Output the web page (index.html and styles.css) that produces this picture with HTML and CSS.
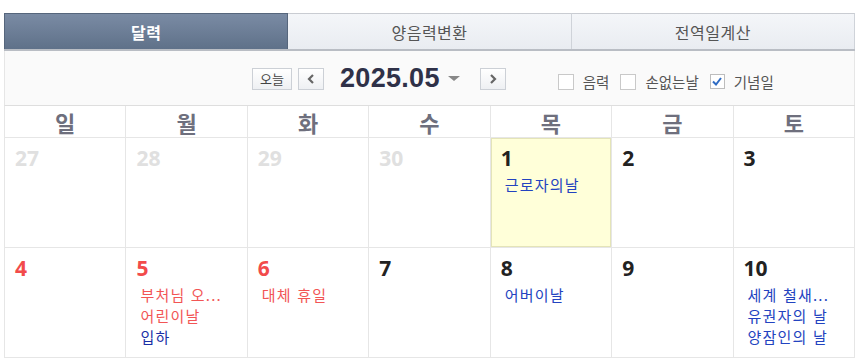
FILE: index.html
```html
<!DOCTYPE html>
<html lang="ko">
<head>
    <meta charset="UTF-8">
    <meta name="viewport" content="width=device-width, initial-scale=1.0">
    <title>달력</title>
    <link rel="stylesheet" href="styles.css">
</head>
<body>

    <div class="calendar">
        <!-- Tabs -->
        <ul class="tabs">
            <li class="tab on">달력</li>
            <li class="tab">양음력변환</li>
            <li class="tab">전역일계산</li>
        </ul>

        <!-- Toolbar -->
        <div class="toolbar">
            <button class="btn today-btn">오늘</button>
            <button class="btn arrow-btn">
                <svg width="8" height="10" viewBox="0 0 8 10"><path d="M6 1 L2 5 L6 9" fill="none" stroke="#666" stroke-width="2.2"/></svg>
            </button>
            <div class="month-title">2025.05 <span class="caret"></span></div>
            <button class="btn arrow-btn">
                <svg width="8" height="10" viewBox="0 0 8 10"><path d="M2 1 L6 5 L2 9" fill="none" stroke="#666" stroke-width="2.2"/></svg>
            </button>
            <div class="options">
                <label class="check"><span class="box"></span>음력</label>
                <label class="check"><span class="box"></span>손없는날</label>
                <label class="check"><span class="box checked">
                    <svg width="10" height="9" viewBox="0 0 10 9"><path d="M1 4.5 L4 7.5 L9 1" fill="none" stroke="#2f6cc4" stroke-width="2"/></svg>
                </span>기념일</label>
            </div>
        </div>

        <!-- Week header -->
        <div class="week">
            <div class="wday">일</div>
            <div class="wday">월</div>
            <div class="wday">화</div>
            <div class="wday">수</div>
            <div class="wday">목</div>
            <div class="wday">금</div>
            <div class="wday">토</div>
        </div>

        <!-- Days -->
        <div class="days">
            <div class="day other"><span class="num">27</span></div>
            <div class="day other"><span class="num">28</span></div>
            <div class="day other"><span class="num">29</span></div>
            <div class="day other"><span class="num">30</span></div>
            <div class="day today"><span class="num">1</span>
                <ul class="events"><li class="blue">근로자의날</li></ul>
            </div>
            <div class="day"><span class="num">2</span></div>
            <div class="day"><span class="num">3</span></div>

            <div class="day holiday"><span class="num">4</span></div>
            <div class="day holiday"><span class="num">5</span>
                <ul class="events">
                    <li class="red">부처님 오...</li>
                    <li class="red">어린이날</li>
                    <li class="navy">입하</li>
                </ul>
            </div>
            <div class="day holiday"><span class="num">6</span>
                <ul class="events"><li class="red">대체 휴일</li></ul>
            </div>
            <div class="day"><span class="num">7</span></div>
            <div class="day"><span class="num">8</span>
                <ul class="events"><li class="blue">어버이날</li></ul>
            </div>
            <div class="day"><span class="num">9</span></div>
            <div class="day"><span class="num">10</span>
                <ul class="events">
                    <li class="blue">세계 철새...</li>
                    <li class="blue">유권자의 날</li>
                    <li class="blue">양잠인의 날</li>
                </ul>
            </div>
        </div>
    </div>

</body>
</html>
```

FILE: styles.css
```css
/* Page */
body {
    margin: 0;
    padding: 13px 11px 0 4px;
    font-family: "Noto Sans CJK KR", "Noto Sans", sans-serif;
    background: #fff;
}

.calendar {
    width: 851px;
}

/* Tabs */
.tabs {
    display: flex;
    list-style: none;
    margin: 0;
    padding: 0;
    height: 38px;
    border-bottom: 2px solid #b9bdc4;
    box-sizing: border-box;
}

.tab {
    flex: 1;
    display: flex;
    align-items: center;
    justify-content: center;
    font-size: 16px;
    letter-spacing: 0.5px;
    color: #555;
    background: linear-gradient(#f4f6f9, #e9ecf1);
    border-top: 1px solid #c9ccd2;
    border-right: 1px solid #cfd3d9;
}

.tab.on {
    color: #fff;
    font-weight: bold;
    background: linear-gradient(#7a8ba4, #5f7189);
    border: 1px solid #56667c;
    border-bottom: none;
}

/* Toolbar */
.toolbar {
    display: flex;
    align-items: center;
    height: 54px;
    padding-left: 247px;
    background: #fafafa;
    border-left: 1px solid #e6e6e6;
    border-right: 1px solid #e6e6e6;
    box-sizing: border-box;
}

.btn {
    height: 22px;
    padding: 0;
    border: 1px solid #ccd0d6;
    background: linear-gradient(#ffffff, #eef0f3);
    font-family: inherit;
    color: #444;
    cursor: pointer;
    margin-top: 2px;
    display: flex;
    align-items: center;
    justify-content: center;
}

.today-btn {
    width: 40px;
    font-size: 13px;
    line-height: 18px;
}

.arrow-btn {
    width: 26px;
    margin-left: 6px;
}

.month-title {
    margin: 0 14px 0 16px;
    font-family: "Liberation Sans", Arial, sans-serif;
    font-size: 27px;
    font-weight: bold;
    letter-spacing: 0.3px;
    color: #2f3148;
    display: flex;
    align-items: center;
}

.caret {
    display: inline-block;
    margin-left: 8px;
    border-left: 6px solid transparent;
    border-right: 6px solid transparent;
    border-top: 5px solid #888;
}

.options {
    display: flex;
    align-items: center;
    margin-left: 52px;
    margin-top: 7px;
    gap: 11px;
}

.check {
    display: flex;
    align-items: center;
    font-size: 14.5px;
    color: #555;
}

.box {
    width: 16px;
    height: 16px;
    border: 1px solid #c9c9c9;
    background: #fff;
    margin-right: 9px;
    box-sizing: border-box;
    display: flex;
    align-items: center;
    justify-content: center;
}

.box.checked {
    width: 15px;
    height: 15px;
    border-color: #bdbdbd;
}

/* Week header */
.week {
    display: grid;
    grid-template-columns: repeat(7, 1fr);
    border-top: 1px solid #dedede;
    border-left: 1px solid #e6e6e6;
}

.wday {
    height: 32px;
    box-sizing: border-box;
    display: flex;
    align-items: center;
    justify-content: center;
    font-size: 22px;
    font-weight: bold;
    color: #6e6f7d;
    border-right: 1px solid #e6e6e6;
    border-bottom: 1px solid #e6e6e6;
}

/* Day cells */
.days {
    display: grid;
    grid-template-columns: repeat(7, 1fr);
    border-left: 1px solid #e6e6e6;
}

.day {
    height: 110px;
    box-sizing: border-box;
    padding: 6px 10px 0;
    border-right: 1px solid #e6e6e6;
    border-bottom: 1px solid #e6e6e6;
}

.num {
    display: block;
    font-family: "Open Sans", sans-serif;
    font-size: 21px;
    font-weight: bold;
    line-height: 28px;
    color: #222;
}

.other .num {
    color: #e0e0e0;
}

.holiday .num {
    color: #f24b4b;
}

.today {
    background: #ffffd9;
    box-shadow: inset 0 0 0 1px #e4e4b8;
}

.events {
    list-style: none;
    margin: 2px 0 0 4px;
    padding: 0;
    font-size: 15px;
    letter-spacing: 1.2px;
    line-height: 21px;
}

.blue {
    color: #2343c0;
}

.navy {
    color: #1a2fa6;
}

.red {
    color: #f25555;
}
```
